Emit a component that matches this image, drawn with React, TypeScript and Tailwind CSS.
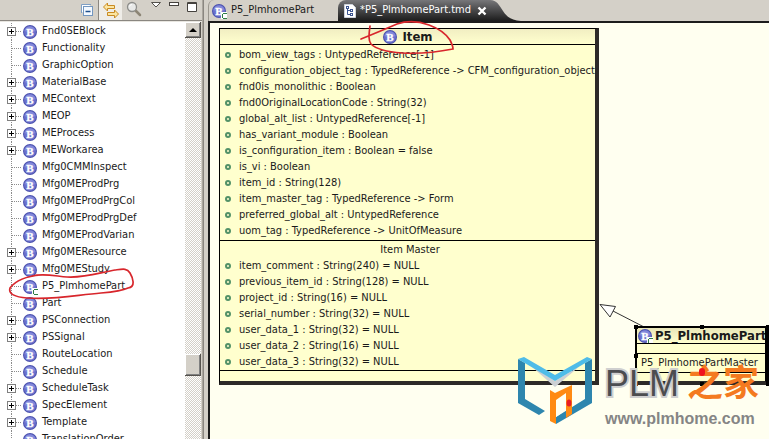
import { useState } from 'react';

interface TreeNode {
  name: string;
  expandable?: boolean;
  custom?: boolean;
}

const treeNodes: TreeNode[] = [
  { name: 'Fnd0SEBlock', expandable: true },
  { name: 'Functionality' },
  { name: 'GraphicOption' },
  { name: 'MaterialBase', expandable: true },
  { name: 'MEContext', expandable: true },
  { name: 'MEOP', expandable: true },
  { name: 'MEProcess', expandable: true },
  { name: 'MEWorkarea', expandable: true },
  { name: 'Mfg0CMMInspect' },
  { name: 'Mfg0MEProdPrg' },
  { name: 'Mfg0MEProdPrgCol' },
  { name: 'Mfg0MEProdPrgDef' },
  { name: 'Mfg0MEProdVarian' },
  { name: 'Mfg0MEResource', expandable: true },
  { name: 'Mfg0MEStudy', expandable: true },
  { name: 'P5_PlmhomePart', custom: true },
  { name: 'Part' },
  { name: 'PSConnection', expandable: true },
  { name: 'PSSignal', expandable: true },
  { name: 'RouteLocation' },
  { name: 'Schedule' },
  { name: 'ScheduleTask', expandable: true },
  { name: 'SpecElement', expandable: true },
  { name: 'Template', expandable: true },
  { name: 'TranslationOrder' }
];

const itemAttributes = [
  'bom_view_tags : UntypedReference[-1]',
  'configuration_object_tag : TypedReference -> CFM_configuration_object',
  'fnd0is_monolithic : Boolean',
  'fnd0OriginalLocationCode : String(32)',
  'global_alt_list : UntypedReference[-1]',
  'has_variant_module : Boolean',
  'is_configuration_item : Boolean = false',
  'is_vi : Boolean',
  'item_id : String(128)',
  'item_master_tag : TypedReference -> Form',
  'preferred_global_alt : UntypedReference',
  'uom_tag : TypedReference -> UnitOfMeasure'
];

const masterAttributes = [
  'item_comment : String(240) = NULL',
  'previous_item_id : String(128) = NULL',
  'project_id : String(16) = NULL',
  'serial_number : String(32) = NULL',
  'user_data_1 : String(32) = NULL',
  'user_data_2 : String(16) = NULL',
  'user_data_3 : String(32) = NULL'
];

function BusinessObjectIcon({ custom }: { custom?: boolean }) {
  return (
    <svg viewBox="0 0 16 16" className="h-4 w-4 shrink-0" aria-hidden="true">
      <circle cx="8" cy="8" r="7" fill="#4a50ad" />
      <circle cx="8" cy="8" r="6" fill="#6a70cc" />
      <path d="M2.5 7a5.6 5.6 0 0 1 11 0c-3 1.500-8 1.500-11 0z" fill="#8289da" />
      <text x="8" y="12" textAnchor="middle" fontFamily="'Liberation Serif', serif" fontWeight="700" fontSize="11" fill="#fff" stroke="#fff" strokeWidth="0.3">
        B
      </text>
      {custom && (
        <>
          <rect x="10" y="9" width="6" height="7" fill="#fff" />
          <path d="M12 10h4v1h-4zM11 11h1v4h-1zM12 15h4v1h-4z" fill="#2f7d46" shapeRendering="crispEdges" />
        </>
      )}
    </svg>
  );
}

function TreeLines({ box, open }: { box?: boolean; open?: boolean }) {
  return (
    <svg viewBox="0 0 22 17" className="h-[17px] w-[22px] shrink-0" shapeRendering="crispEdges" aria-hidden="true">
      <path d="M11.500 0v17M12 8.500h10" stroke="#8c8c8c" strokeDasharray="1 1" fill="none" />
      {box && (
        <>
          <rect x="7.500" y="4.500" width="8" height="8" fill="#fff" stroke="#808080" />
          <path d={open ? 'M9 8.500h5' : 'M9 8.500h5M11.500 6v5'} stroke="#000" fill="none" />
        </>
      )}
    </svg>
  );
}

function TreeRow({ node }: { node: TreeNode }) {
  const [open, setOpen] = useState(false);

  return (
    <li className="flex h-[17px] items-center">
      {node.expandable ? (
        <button type="button" aria-label={`Expand ${node.name}`} onClick={() => setOpen(!open)}>
          <TreeLines box open={open} />
        </button>
      ) : (
        <TreeLines />
      )}
      <BusinessObjectIcon custom={node.custom} />
      <span className="ml-1 whitespace-nowrap">{node.name}</span>
    </li>
  );
}

function ExplorerToolbar() {
  return (
    <div className="flex h-[21px] shrink-0 items-start justify-end border-b border-[#8a8680] bg-[#d4d0c8] pr-1">
      <button type="button" aria-label="Collapse all" className="mr-1 pt-[3px]">
        <svg viewBox="0 0 14 14" className="h-3.5 w-3.5">
          <path d="M1.500 10V1.500H11" fill="#fff" stroke="#7f9fc4" />
          <rect x="3.500" y="3.500" width="9" height="9" fill="#f4f9ff" stroke="#7396bf" />
          <path d="M5.500 8.500h5" stroke="#1d4f8c" strokeWidth="1.500" />
        </svg>
      </button>
      <button type="button" aria-label="Link with editor" className="h-5 w-6 border-l border-[#8a8680] bg-[#efede8] px-1">
        <svg viewBox="0 0 16 16" className="h-4 w-4">
          <path
            d="M.5 5 4.500 1v2.500h7v3h-7V9zM15.500 12 11.500 8v2.500h-7v3h7V16z"
            fill="#fbe6a2"
            stroke="#c98a22"
            strokeLinejoin="round"
          />
        </svg>
      </button>
      <button type="button" aria-label="Search" className="mr-1 ml-1 pt-px">
        <svg viewBox="0 0 16 16" className="h-4 w-4">
          <path d="M9.500 9.500 14 14" stroke="#8d8676" strokeWidth="2.500" strokeLinecap="round" />
          <circle cx="6" cy="6" r="4.500" fill="#e8e9e8" stroke="#8d8d8a" strokeWidth="1.300" />
          <path d="M3.500 5.500A2.500 2.500 0 0 1 6 3.500" stroke="#fff" fill="none" />
        </svg>
      </button>
      <button type="button" aria-label="View menu" className="mr-1.5 ml-1">
        <svg viewBox="0 0 12 10" className="h-2.5 w-3">
          <path d="M1.500 2.500h9L6 7z" fill="#fff" stroke="#55524d" />
        </svg>
      </button>
      <button type="button" aria-label="Minimize" className="mr-1.5">
        <svg viewBox="0 0 12 10" className="h-2.5 w-3">
          <rect x="1.500" y="2.500" width="9" height="3" fill="#fff" stroke="#45423e" />
        </svg>
      </button>
      <button type="button" aria-label="Maximize">
        <svg viewBox="0 0 12 13" className="h-[13px] w-3">
          <path d="M1.500 2.500h9v9h-9z" fill="#fff" stroke="#45423e" />
          <path d="M1 3.500h10" stroke="#45423e" />
        </svg>
      </button>
    </div>
  );
}

function Explorer() {
  return (
    <aside className="flex w-[203px] shrink-0 flex-col border-r border-[#aaa69e]">
      <ExplorerToolbar />
      <div className="flex min-h-0 flex-1 border-t border-[#e8e6e0] bg-white">
        <ul className="min-w-0 flex-1 overflow-hidden pt-px">
          {treeNodes.map((node) => (
            <TreeRow key={node.name} node={node} />
          ))}
        </ul>
        <div className="flex w-4 flex-col bg-[repeating-conic-gradient(#ffffff_0_25%,#d4d0c8_0_50%)] bg-[size:2px_2px]">
          <button
            type="button"
            aria-label="Scroll up"
            className="flex h-4 items-center justify-center border-r border-b border-[#55524d] bg-[#d4d0c8] shadow-[inset_1px_1px_0_#ffffff,inset_-1px_-1px_0_#808080]"
          >
            <svg viewBox="0 0 8 4" className="h-1 w-2">
              <path d="M4 0 8 4H0z" />
            </svg>
          </button>
          <div className="flex-[316]" />
          <div className="h-[22px] border-r border-b border-[#55524d] bg-[#d4d0c8] shadow-[inset_1px_1px_0_#ffffff,inset_-1px_-1px_0_#808080]" />
          <div className="flex-[63]" />
        </div>
        <div className="w-px bg-[#d4d0c8]" />
      </div>
    </aside>
  );
}

function EditorTabs() {
  return (
    <div className="flex h-[23px] shrink-0 border-b-2 border-[#1c1c1c] bg-[#d4d0c8]">
      <button type="button" className="flex w-[130px] items-center rounded-tl-md border-l border-[#9b978f] pl-0.5">
        <BusinessObjectIcon custom />
        <span className="ml-1">P5_PlmhomePart</span>
      </button>
      <div className="flex items-center rounded-tl-lg bg-linear-to-b from-[#77777a] to-[#1c1c1c] pl-1.5 text-white">
        <svg viewBox="0 0 12 14" className="h-3.5 w-3">
          <path d="M.5 .5h8l3 3v10H.5z" fill="#fff" stroke="#cfd3dc" />
          <path d="M3.500 3v7.500h3M3.500 6.500h3" stroke="#3c5490" fill="none" />
          <path d="M2 2h3v3H2zM6 5h3v3H6zM6 9h3v3H6z" fill="#3c5490" />
          <path d="M3 3h1v1H3zM7 6h1v1H7zM7 10h1v1H7z" fill="#fff" />
        </svg>
        <span className="ml-1">*P5_PlmhomePart.tmd</span>
        <button type="button" aria-label="Close tab" className="ml-1.5">
          <svg viewBox="0 0 10 10" className="h-2.5 w-2.5">
            <path d="M1.500 1.500l7 7M8.500 1.500l-7 7" stroke="#fff" strokeWidth="2.400" />
          </svg>
        </button>
      </div>
      <svg viewBox="0 0 34 21" className="h-[21px] w-[34px]" aria-hidden="true">
        <defs>
          <linearGradient id="tabFade" x1="0" y1="0" x2="0" y2="1">
            <stop offset="0" stopColor="#77777a" />
            <stop offset="1" stopColor="#1c1c1c" />
          </linearGradient>
        </defs>
        <path d="M0 0h3c7 0 9 5 13 11 4 6 8 9 18 10H0z" fill="url(#tabFade)" />
      </svg>
    </div>
  );
}

function Attribute({ text }: { text: string }) {
  return (
    <li className="flex h-4 items-center whitespace-nowrap">
      <span className="mr-2 h-1.5 w-1.5 rounded-full border-2 border-[#529268]" />
      {text}
    </li>
  );
}

function ItemCard() {
  return (
    <section className="absolute top-[5px] left-[9px] w-[380px] border border-r-4 border-b-4 border-black border-r-[#2d2a28] border-b-[#2d2a28] bg-[#ffffce]">
      <h2 className="flex h-4 items-center justify-center gap-1 border-b border-black bg-linear-to-b from-[#f1eec2] to-[#ffffce] text-[13px] font-bold">
        <BusinessObjectIcon />
        Item
      </h2>
      <ul className="border-b border-black pt-0.5 pb-px pl-[5px]">
        {itemAttributes.map((text) => (
          <Attribute key={text} text={text} />
        ))}
      </ul>
      <div className="border-b border-black pt-px pl-[5px]">
        <h3 className="h-4 text-center leading-4">Item Master</h3>
        <ul>
          {masterAttributes.map((text) => (
            <Attribute key={text} text={text} />
          ))}
        </ul>
      </div>
      <div className="h-2.5" />
    </section>
  );
}

function PartCard() {
  return (
    <section className="absolute top-[303px] left-[425px] w-[134px]">
      <div className="border-2 border-r-4 border-b-4 border-black border-b-[#2d2a28] bg-[#ffffce]">
        <h2 className="flex h-4 items-center gap-0.5 overflow-hidden border-b border-black bg-linear-to-b from-[#e9e6b8] to-[#ffffce] text-[13px] font-bold whitespace-nowrap">
          <BusinessObjectIcon custom />
          P5_PlmhomePart
        </h2>
        <div className="h-2.5 border-b border-black" />
        <p className="h-[19px] border-b border-black pl-1 leading-[18px] whitespace-nowrap">P5_PlmhomePartMaster</p>
        <div className="h-2" />
      </div>
      {/* selection handles */}
      <div className="absolute -inset-px grid grid-cols-3 content-between">
        <span className="h-1 w-1 bg-black" />
        <span className="h-1 w-1 justify-self-center bg-black" />
        <span className="h-1 w-1 justify-self-end bg-black" />
        <span className="h-1 w-1 bg-black" />
        <span className="col-start-3 h-1 w-1 justify-self-end bg-black" />
        <span className="h-1 w-1 bg-black" />
        <span className="h-1 w-1 justify-self-center bg-black" />
        <span className="h-1 w-1 justify-self-end bg-black" />
      </div>
    </section>
  );
}

function Watermark() {
  return (
    <div className="absolute top-[334px] left-[308px] flex w-60 items-start gap-3">
      <svg viewBox="0 0 75 68" className="h-[68px] w-[75px] shrink-0" aria-hidden="true">
        <path d="M13 9 37 30 62 9 37 24z" fill="#ccd0d4" />
        <path d="M0 2 7 6v36l20 12-6 4L0 46z" fill="#2e86ae" />
        <path d="M74 2 67 6v36L38 60v7l36-21z" fill="#2e86ae" />
        <path d="M0 2 6 0 37 18 69 0l5 2-37 22z" fill="#4fbce8" />
        <path d="M38 43 48 36v17l-10 7z" fill="#fffff0" />
        <path d="M32 33l5 3 17-8v29l-6 4V36l-10 7v24l-6-3z" fill="#ff8a12" />
        <ellipse cx="51" cy="46" rx="2.500" ry="3.500" fill="#e81c24" />
      </svg>
      <div className="flex flex-col pt-1 font-['Liberation_Sans','Noto_Sans_CJK_SC',sans-serif]">
        <div className="flex h-[46px] items-center gap-2 text-4xl whitespace-nowrap">
          <span className="text-[#4c4d50] [-webkit-text-stroke:4px_#cfcfcf] [paint-order:stroke_fill]">PLM</span>
          <span className="relative font-bold text-[#f47a20]">
            之家
            <i className="absolute top-1 left-3 h-2 w-1.5 rounded-full bg-[#f0141e]" />
          </span>
        </div>
        <span className="text-base font-bold text-[#858585]">www.plmhome.com</span>
      </div>
    </div>
  );
}

export default function App() {
  return (
    <div className="relative flex h-screen overflow-hidden bg-[#d4d0c8] font-['DejaVu_Sans_Condensed','DejaVu_Sans',sans-serif] text-[11px] text-[#1a1a1a]">
      <Explorer />
      <div className="w-[5px] shrink-0 border-l border-[#8a8680]" />
      <main className="flex min-w-0 flex-1 flex-col">
        <EditorTabs />
        <div className="relative flex-1 overflow-hidden border-l-2 border-[#1c1c1c] bg-[#fffff0]">
          <ItemCard />
          {/* inheritance connector */}
          <svg viewBox="0 0 60 30" className="absolute top-[279px] left-[388px] h-[30px] w-[60px]" aria-hidden="true">
            <path d="M15 9 48 26" stroke="#333" />
            <path d="M2 2.500 17.500 4.500 12 15z" fill="#fff" stroke="#333" />
          </svg>
          <PartCard />
          <Watermark />
        </div>
      </main>

      {/* hand drawn review marks */}
      <svg viewBox="0 0 460 310" className="pointer-events-none absolute top-0 left-0 h-[310px] w-[460px]" fill="none" stroke="#d8262c" strokeWidth="1.700" strokeLinecap="round" aria-hidden="true">
        <path d="M41 275c-14 1-25 5-31 13-2 6 5 9 17 10 29 2 49-3 74-5 12-1 21-2 27-5 8-1 5-10 2-15-3-5-7-4-15-3-17 3-29 8-48 7-12-1-24-4-35-1" />
        <path d="M361 39c10-4 22-9 36-15 9-3 21-3 32 1 11 4 17 9 21 15 2 4 3 7 3 9-15 3-32 5-51 4-14-1-26-4-31-9-3-4-2-10-1-18" />
      </svg>
    </div>
  );
}
